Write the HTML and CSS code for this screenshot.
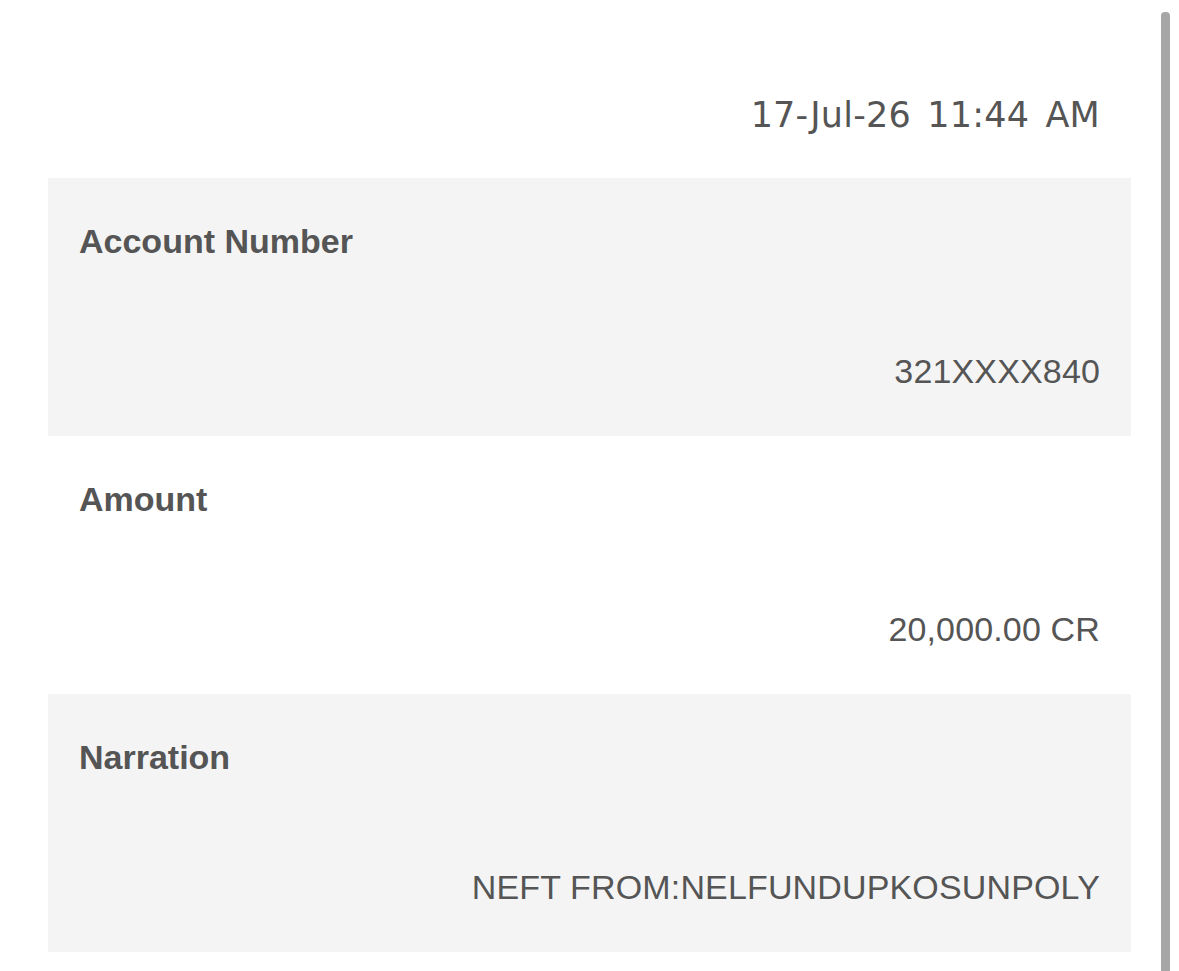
FILE: index.html
```html
<!DOCTYPE html>
<html lang="en">
<head>
<meta charset="utf-8">
<title>Transaction Details</title>
<link rel="stylesheet" href="styles.css">
</head>
<body>
  <main class="sheet">
    <div class="stamp">17-Jul-26 11:44 AM</div>
    <section class="details">
      <div class="row row--shaded">
        <div class="row__label">Account Number</div>
        <div class="row__value">321XXXX840</div>
      </div>
      <div class="row">
        <div class="row__label">Amount</div>
        <div class="row__value">20,000.00 CR</div>
      </div>
      <div class="row row--shaded">
        <div class="row__label">Narration</div>
        <div class="row__value">NEFT FROM:NELFUNDUPKOSUNPOLY</div>
      </div>
    </section>
  </main>
  <div class="scroll-thumb"></div>
</body>
</html>
```
FILE: styles.css
```css
html, body {
  margin: 0;
  padding: 0;
  background: #ffffff;
  height: 100%;
  overflow: hidden;
}

body {
  font-family: "Liberation Sans", Arial, sans-serif;
  color: #555555;
}

.sheet {
  width: 1083px;
  margin-left: 48px;
  display: flex;
  flex-direction: column;
}

.stamp {
  font-family: "DejaVu Sans", Verdana, sans-serif;
  font-size: 35px;
  line-height: 40px;
  word-spacing: 5px;
  letter-spacing: 0.2px;
  text-align: right;
  padding: 95px 31px 43px 0;
  color: #555555;
}

.details {
  display: flex;
  flex-direction: column;
}

.row {
  display: flex;
  flex-direction: column;
  height: 258px;
  box-sizing: border-box;
  padding: 43px 31px 0 31px;
  font-size: 34px;
  line-height: 40px;
}

.row--shaded {
  background: #f4f4f4;
}

.row__label {
  font-weight: bold;
}

.row__value {
  margin-top: 90px;
  text-align: right;
  letter-spacing: 0.15px;
}

.scroll-thumb {
  position: absolute;
  top: 12px;
  bottom: 0;
  left: 1161px;
  width: 9px;
  background: #a6a6a6;
  border-radius: 4px 4px 0 0;
}
```
